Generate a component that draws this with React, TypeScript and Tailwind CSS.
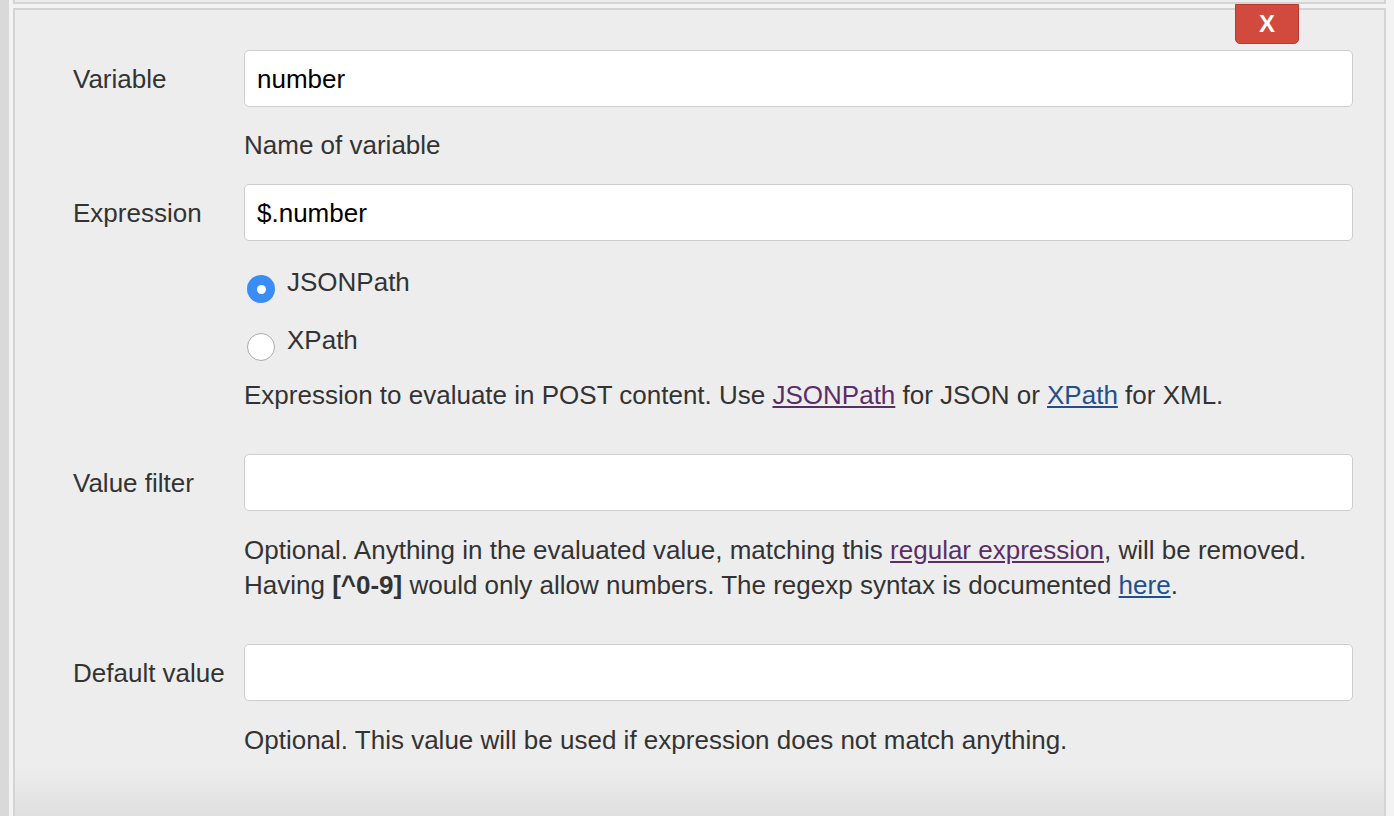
import React from "react";

const font = { fontFamily: '"Liberation Sans", Arial, Helvetica, sans-serif' };

function Field({ label, value }: { label: string; value?: string }) {
  return (
    <div className="flex">
      <div className="w-[171px] h-[57px] flex items-center pt-[2px] text-[26px] text-[#333]">{label}</div>
      <div className="flex-1 h-[57px] bg-white border border-[#cdcdcd] rounded-[5px] flex items-center pl-[12px] pt-[1px] text-[26px] text-black">
        {value}
      </div>
    </div>
  );
}

function Desc({ children, className = "" }: { children: React.ReactNode; className?: string }) {
  return <div className={`ml-[171px] text-[26px] leading-[35px] text-[#333] ${className}`}>{children}</div>;
}

function Radio({ checked, label, className = "" }: { checked: boolean; label: string; className?: string }) {
  return (
    <div className={`ml-[171px] flex items-start ${className}`}>
      <div className="ml-[3px] mt-[10px] w-[28px] h-[28px] shrink-0">
        {checked ? (
          <div className="w-[28px] h-[28px] rounded-full bg-[#3b8df6] flex items-center justify-center">
            <div className="w-[9px] h-[9px] rounded-full bg-white" />
          </div>
        ) : (
          <div className="w-[28px] h-[28px] rounded-full bg-white border border-[#ababab]" />
        )}
      </div>
      <div className="ml-[12px] text-[26px] leading-[35px] text-[#333]">{label}</div>
    </div>
  );
}

export default function App() {
  return (
    <div style={font} className="flex w-[1394px] h-[816px] bg-[#f3f3f3] overflow-hidden">
      <div className="w-[9px] bg-[#d9d9d9]" />
      <div className="ml-[4px] w-[1373px] flex flex-col">
        <div className="h-[4px] border-x-2 border-b-2 border-[#d4d4d4] bg-[#ececec]" />
        <div className="relative mt-[4px] flex-1 border-2 border-b-0 border-[#d4d4d4] bg-[linear-gradient(to_bottom,#ededed_0%,#ededed_94%,#dfdfdf_100%)]">
          <div className="absolute top-[-6px] right-[85px] w-[64px] h-[40px] bg-[#d24a3d] border border-[#b83a2e] rounded-b-[5px] flex items-center justify-center text-white font-bold text-[24px]">
            X
          </div>
          <div className="pl-[58px] pr-[31px] pt-[40px]">
            <Field label="Variable" value="number" />
            <Desc className="mt-[21px]">Name of variable</Desc>
            <div className="mt-[21px]">
              <Field label="Expression" value="$.number" />
            </div>
            <Radio checked label="JSONPath" className="mt-[24px]" />
            <Radio checked={false} label="XPath" className="mt-[20px]" />
            <Desc className="mt-[17px]">
              Expression to evaluate in POST content. Use{" "}
              <a className="text-[#5b2d68] underline">JSONPath</a> for JSON or{" "}
              <a className="text-[#1f4f8f] underline">XPath</a> for XML.
            </Desc>
            <div className="mt-[41px]">
              <Field label="Value filter" />
            </div>
            <Desc className="mt-[22px]">
              Optional. Anything in the evaluated value, matching this{" "}
              <a className="text-[#5b2d68] underline">regular expression</a>, will be removed.
              <br />
              Having <b>[^0-9]</b> would only allow numbers. The regexp syntax is documented{" "}
              <a className="text-[#1f4f8f] underline">here</a>.
            </Desc>
            <div className="mt-[41px]">
              <Field label="Default value" />
            </div>
            <Desc className="mt-[22px]">Optional. This value will be used if expression does not match anything.</Desc>
          </div>
        </div>
      </div>
    </div>
  );
}
